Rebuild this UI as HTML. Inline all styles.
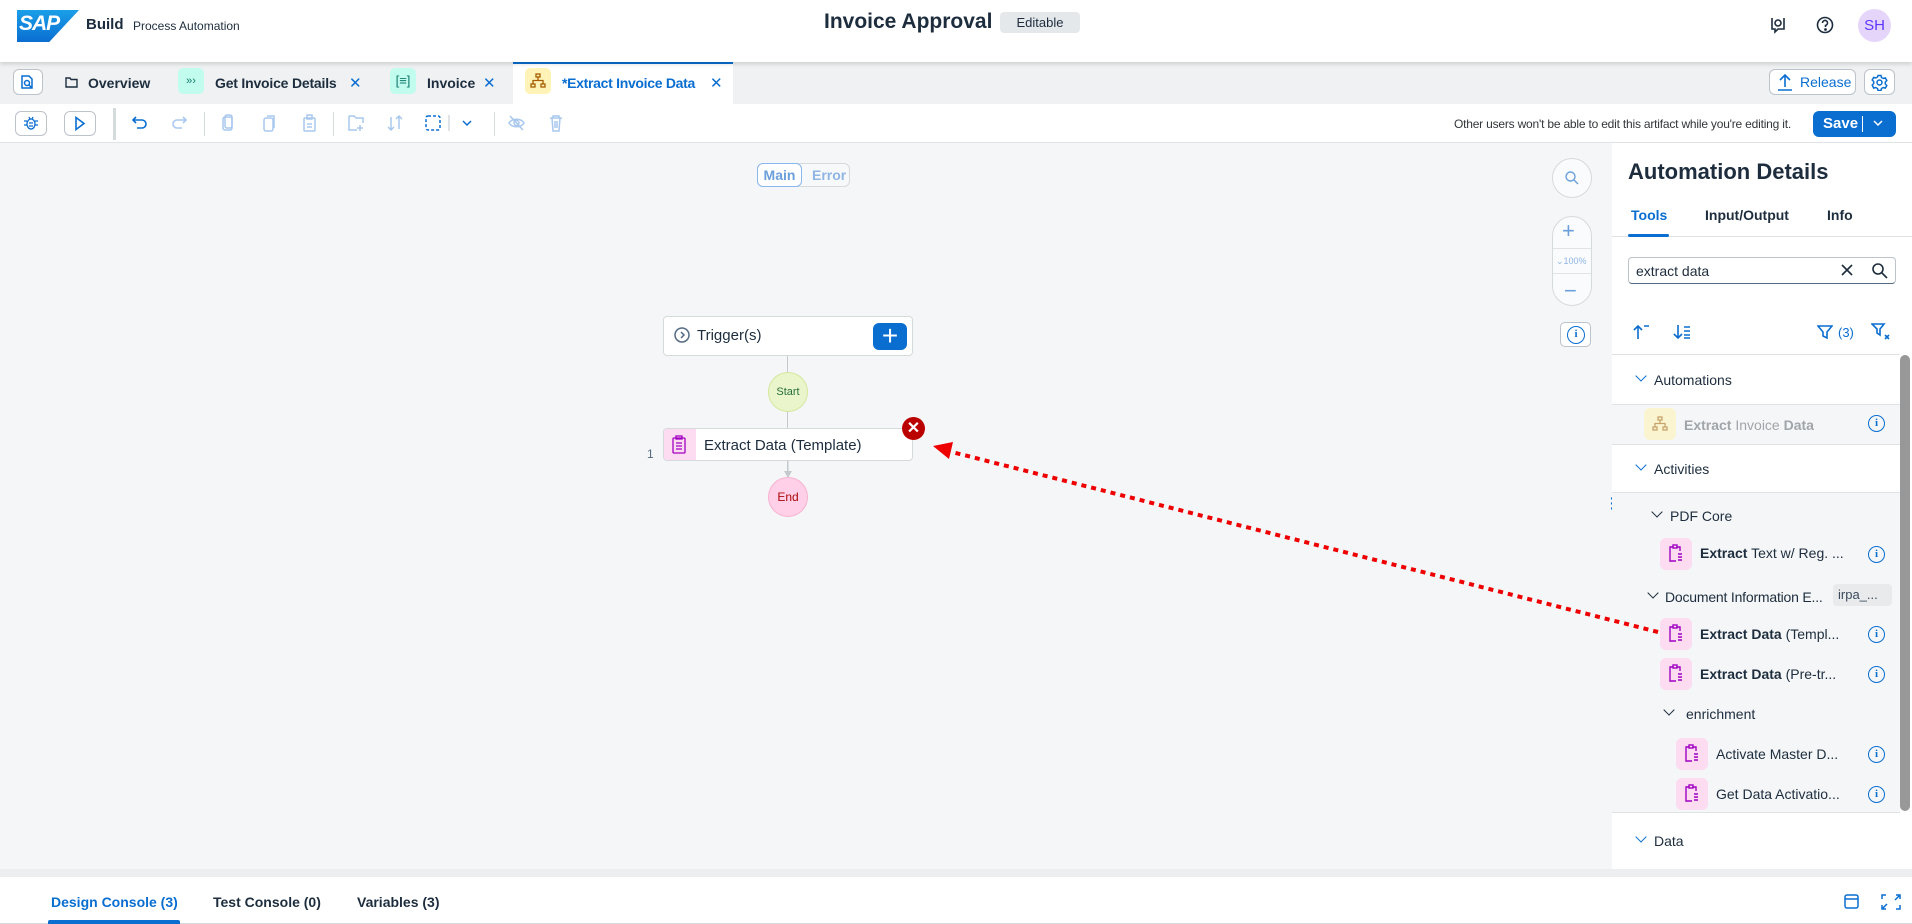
<!DOCTYPE html>
<html><head><meta charset="utf-8"><style>
*{box-sizing:border-box;margin:0;padding:0}
body{width:1912px;height:924px;overflow:hidden;background:#f5f6f7;font-family:"Liberation Sans",Arial,sans-serif;color:#1d2d3e;position:relative}
.a{position:absolute}
.hdr{left:0;top:0;width:1912px;height:62px;background:#fff;box-shadow:0 2px 4px rgba(0,0,0,.15);z-index:3}
.tabs{left:0;top:62px;width:1912px;height:42px;background:#eff1f2}
.tb{left:0;top:104px;width:1912px;height:39px;background:#fff;border-bottom:1px solid #e0e3e6}
.tab{font-size:14px;font-weight:bold;top:75px}
.x{color:#0a6ed1;font-size:15px;top:74px}
.tile{width:26px;height:26px;border-radius:5px;top:68px}
.btn{border:1px solid #bcc3ca;border-radius:6px;background:#fff}
.rp{left:1612px;top:143px;width:300px;height:726px;background:#fff}
.row{font-size:14px;color:#1d2d3e}
.ic{width:32px;height:32px;border-radius:6px;background:#fddcf2}
.info{width:17px;height:17px;border:1.6px solid #0a6ed1;border-radius:50%;color:#0a6ed1;font-size:11px;font-weight:bold;text-align:center;line-height:14px;font-family:"Liberation Serif",serif}
.chev{width:8px;height:8px;border-right:1.6px solid #1d2d3e;border-bottom:1.6px solid #1d2d3e;transform:rotate(45deg)}
.chev.b{border-color:#0a6ed1}
</style></head><body>
<!-- header -->
<div class="a hdr">
  <div class="a" style="left:17px;top:10px;width:62px;height:32px;background:linear-gradient(#1a9fe8,#0a6ed1);clip-path:polygon(0 0,100% 0,52% 100%,0 100%)"></div>
  <div class="a" style="left:19px;top:12px;color:#fff;font-weight:bold;font-size:21px;font-style:italic;letter-spacing:-1px">SAP</div>
  <div class="a" style="left:86px;top:16px;font-size:15px;font-weight:bold">Build</div>
  <div class="a" style="left:133px;top:19px;font-size:12px">Process Automation</div>
  <div class="a" style="left:824px;top:10px;font-size:21px;font-weight:bold">Invoice Approval</div>
  <div class="a" style="left:1000px;top:12px;width:80px;height:21px;background:#e5e8eb;border-radius:4px;font-size:13px;text-align:center;line-height:21px">Editable</div>
  <svg class="a" style="left:1768px;top:15px" width="20" height="20" viewBox="0 0 20 20" fill="none" stroke="#1d2d3e" stroke-width="1.6"><path d="M4 3v11h3v3l3-3h6V3"/><circle cx="10" cy="8" r="3"/></svg>
  <svg class="a" style="left:1815px;top:15px" width="20" height="20" viewBox="0 0 20 20" fill="none" stroke="#1d2d3e" stroke-width="1.6"><circle cx="10" cy="10" r="7.5"/><path d="M7.5 8a2.5 2.5 0 1 1 3 2.4V12"/><circle cx="10.5" cy="14.5" r=".6" fill="#1d2d3e"/></svg>
  <div class="a" style="left:1858px;top:9px;width:33px;height:33px;border-radius:50%;background:#e5d5fb;color:#5d36ff;font-size:15px;text-align:center;line-height:33px">SH</div>
</div>
<!-- tabs -->
<div class="a tabs"></div>
<div class="a btn" style="left:13px;top:69px;width:30px;height:26px"></div>
<svg class="a" style="left:20px;top:74px" width="16" height="16" viewBox="0 0 16 16" fill="none" stroke="#0a6ed1" stroke-width="1.5"><path d="M2 2h7l3 3v9H2z"/><circle cx="7" cy="9" r="2.5"/><path d="M9 11l3 3"/></svg>
<svg class="a" style="left:65px;top:76px" width="13" height="12" viewBox="0 0 13 12" fill="none" stroke="#1d2d3e" stroke-width="1.4"><path d="M1 2h4l1 1.5h6V11H1z"/></svg>
<div class="a tab" style="left:88px">Overview</div>
<div class="a tile" style="left:178px;background:#c2fcee;color:#0f7a6b;font-size:11px;text-align:center;line-height:26px">»›</div>
<div class="a tab" style="left:215px;letter-spacing:-.2px">Get Invoice Details</div><div class="a x" style="left:349px">✕</div>
<div class="a tile" style="left:390px;background:#c2fcee;color:#0f7a6b;font-size:13px;text-align:center;line-height:26px">[≡]</div>
<div class="a tab" style="left:427px">Invoice</div><div class="a x" style="left:483px">✕</div>
<div class="a" style="left:513px;top:61px;width:220px;height:43px;background:#fff;border-top:3px solid #0a6ed1"></div>
<div class="a tile" style="left:525px;background:#fff3b8"></div>
<svg class="a" style="left:530px;top:73px" width="16" height="16" viewBox="0 0 16 16" fill="none" stroke="#a45d00" stroke-width="1.3"><rect x="6" y="1" width="4" height="3"/><rect x="1" y="11" width="4" height="3"/><rect x="11" y="11" width="4" height="3"/><path d="M8 4v3M3 11V7.5h10V11"/></svg>
<div class="a tab" style="left:562px;color:#0a6ed1;letter-spacing:-.3px">*Extract Invoice Data</div><div class="a x" style="left:710px">✕</div>
<div class="a btn" style="left:1769px;top:69px;width:87px;height:26px;color:#0a6ed1;font-size:14px;line-height:24px;padding-left:30px">Release</div>
<svg class="a" style="left:1777px;top:73px" width="16" height="18" viewBox="0 0 16 18" fill="none" stroke="#0a6ed1" stroke-width="1.6"><path d="M8 14V2M3 7l5-5 5 5M1 17h14"/></svg>
<div class="a btn" style="left:1864px;top:69px;width:31px;height:26px"></div>
<svg class="a" style="left:1871px;top:74px" width="17" height="17" viewBox="0 0 17 17" fill="none" stroke="#0a6ed1" stroke-width="1.5"><circle cx="8.5" cy="8.5" r="2.5"/><path d="M7 1.5h3l.5 2 1.8 1 2-.6 1.5 2.6-1.5 1.5v2l1.5 1.5-1.5 2.6-2-.6-1.8 1-.5 2H7l-.5-2-1.8-1-2 .6L1.2 11l1.5-1.5v-2L1.2 6l1.5-2.6 2 .6 1.8-1z"/></svg>
<!-- toolbar -->
<div class="a tb"></div>
<div class="a btn" style="left:15px;top:111px;width:32px;height:25px"></div>
<svg class="a" style="left:23px;top:115px" width="16" height="16" viewBox="0 0 16 16" fill="none" stroke="#0a6ed1" stroke-width="1.3"><ellipse cx="8" cy="9" rx="4" ry="5"/><path d="M1 6h3M12 6h3M1 10h3M12 10h3M6 2l1 2M10 2l-1 2M6 8h4M6 11h4"/></svg>
<div class="a btn" style="left:64px;top:111px;width:32px;height:25px"></div>
<svg class="a" style="left:73px;top:116px" width="14" height="15" viewBox="0 0 14 15" fill="none" stroke="#0a6ed1" stroke-width="1.6"><path d="M3 1.5l8 6-8 6z"/></svg>
<div class="a" style="left:113px;top:108px;width:3px;height:32px;background:#d5dadd"></div>
<svg class="a" style="left:131px;top:114px" width="18" height="18" viewBox="0 0 18 18" fill="none" stroke="#0a6ed1" stroke-width="1.6"><path d="M5 3L2 6l3 3M2 6h9a4 4 0 0 1 0 8H6"/></svg>
<svg class="a" style="left:170px;top:114px" width="18" height="18" viewBox="0 0 18 18" fill="none" stroke="#a9c8ee" stroke-width="1.6"><path d="M13 3l3 3-3 3M16 6H7a4 4 0 0 0 0 8h5"/></svg>
<div class="a" style="left:204px;top:112px;width:1px;height:24px;background:#d5dadd"></div>
<svg class="a" style="left:220px;top:113px" width="100" height="20" viewBox="0 0 100 20" fill="none" stroke="#a9c8ee" stroke-width="1.5"><rect x="3" y="4" width="9" height="13" rx="2"/><rect x="5" y="2" width="7" height="13" rx="2"/><rect x="44" y="5" width="9" height="13" rx="2"/><path d="M47 3h7v12"/><rect x="84" y="5" width="11" height="13" rx="1"/><rect x="87" y="2" width="5" height="4"/><path d="M87 11h5M87 14h5"/></svg>
<div class="a" style="left:333px;top:112px;width:1px;height:24px;background:#d5dadd"></div>
<svg class="a" style="left:347px;top:113px" width="140" height="20" viewBox="0 0 140 20" fill="none" stroke-width="1.5"><path stroke="#a9c8ee" d="M2 3h5l2 2h7v5M2 3v14h8M13 12v6M10 15h6"/><path stroke="#a9c8ee" d="M44 4v13M41 14l3 3 3-3M52 16V3M49 6l3-3 3 3"/><rect stroke="#0a6ed1" stroke-dasharray="3 2" x="79" y="3" width="14" height="14" rx="2"/><path stroke="#d5dadd" d="M102 2v16"/><path stroke="#0a6ed1" d="M116 8l4 4 4-4"/></svg>
<div class="a" style="left:494px;top:112px;width:1px;height:24px;background:#d5dadd"></div>
<svg class="a" style="left:507px;top:113px" width="60" height="20" viewBox="0 0 60 20" fill="none" stroke="#a9c8ee" stroke-width="1.5"><path d="M2 10c3-5 12-5 15 0-3 5-12 5-15 0zM3 3l13 14"/><circle cx="9.5" cy="10" r="2.5"/><path d="M43 5h12M46 5V3h6v2M45 5l1 13h6l1-13M48 8v7M50 8v7"/></svg>
<div class="a" style="left:1441px;top:117px;width:350px;text-align:right;font-size:12px;color:#32363a;white-space:nowrap;letter-spacing:-.2px">Other users won't be able to edit this artifact while you're editing it.</div>
<div class="a" style="left:1813px;top:111px;width:83px;height:26px;background:#0a6ed1;border-radius:6px;color:#fff;font-weight:bold;font-size:15px;line-height:26px;padding-left:10px">Save</div>
<div class="a" style="left:1862px;top:116px;width:1px;height:16px;background:#fff"></div>
<svg class="a" style="left:1872px;top:118px" width="12" height="10" viewBox="0 0 12 10" fill="none" stroke="#fff" stroke-width="1.5"><path d="M2 3l4 4 4-4"/></svg>
<!-- canvas -->
<div class="a" style="left:757px;top:163px;width:93px;height:24px;border:1px solid #d5dadd;border-radius:6px;background:#f7f8f9"></div>
<div class="a" style="left:757px;top:163px;width:45px;height:24px;border:1px solid #89b7ee;border-radius:6px;background:#fff;color:#6a9fdb;font-weight:bold;font-size:14px;text-align:center;line-height:22px">Main</div>
<div class="a" style="left:812px;top:167px;color:#8fb5e5;font-weight:bold;font-size:14px">Error</div>
<div class="a" style="left:787px;top:356px;width:1px;height:140px;background:#c4c9cd"></div>
<div class="a" style="left:663px;top:316px;width:250px;height:40px;background:#fff;border:1px solid #d5dadd;border-radius:4px"></div>
<svg class="a" style="left:673px;top:326px" width="18" height="18" viewBox="0 0 18 18" fill="none" stroke="#556b82" stroke-width="1.5"><circle cx="9" cy="9" r="7"/><path d="M8 6l3 3-3 3"/></svg>
<div class="a" style="left:697px;top:327px;font-size:15px">Trigger(s)</div>
<div class="a" style="left:873px;top:323px;width:34px;height:27px;background:#0a6ed1;border-radius:6px;color:#fff;font-size:28px;text-align:center;line-height:26px">+</div>
<div class="a" style="left:768px;top:372px;width:40px;height:40px;border-radius:50%;background:#ebf5cb;border:1px solid #d4e79e;font-size:11px;color:#256f3a;text-align:center;line-height:38px">Start</div>
<div class="a" style="left:663px;top:428px;width:250px;height:33px;background:#fff;border:1px solid #d5dadd;border-radius:4px;overflow:hidden"><div style="width:32px;height:33px;background:#fddcf2"></div></div>
<svg class="a" style="left:670px;top:435px" width="18" height="19" viewBox="0 0 18 19" fill="none" stroke="#a100c2" stroke-width="1.3"><rect x="3" y="3" width="12" height="15" rx="1"/><rect x="6" y="1" width="6" height="3"/><path d="M6 8h6M6 11h6M6 14h6"/></svg>
<div class="a" style="left:704px;top:437px;font-size:15px">Extract Data (Template)</div>
<div class="a" style="left:647px;top:447px;font-size:12px;color:#556b82">1</div>
<div class="a" style="left:902px;top:417px;width:23px;height:23px;border-radius:50%;background:#bb0000;color:#fff;font-size:16px;font-weight:bold;text-align:center;line-height:23px">✕</div>
<svg class="a" style="left:782px;top:461px" width="12" height="18"><path d="M6 0v12" stroke="#c4c9cd"/><path d="M2 10l4 7 4-7z" fill="#c4c9cd"/></svg>
<div class="a" style="left:768px;top:477px;width:40px;height:40px;border-radius:50%;background:#ffd0e7;border:1px solid #f9b3d2;font-size:12px;color:#aa0808;text-align:center;line-height:38px">End</div>
<!-- zoom controls -->
<div class="a" style="left:1552px;top:158px;width:40px;height:40px;border-radius:50%;background:#fafbfc;border:1px solid #d5dadd"></div>
<svg class="a" style="left:1564px;top:170px" width="16" height="16" viewBox="0 0 16 16" fill="none" stroke="#6a9fdb" stroke-width="1.4"><circle cx="6.5" cy="6.5" r="4.5"/><path d="M10 10l4 4"/></svg>
<div class="a" style="left:1552px;top:216px;width:40px;height:90px;border-radius:20px;background:#fafbfc;border:1px solid #d5dadd"></div>
<div class="a" style="left:1553px;top:248px;width:38px;height:1px;background:#e0e3e6"></div>
<div class="a" style="left:1553px;top:273px;width:38px;height:1px;background:#e0e3e6"></div>
<div class="a" style="left:1562px;top:218px;color:#6a9fdb;font-size:22px">+</div>
<div class="a" style="left:1556px;top:256px;color:#8fb5e5;font-size:9px">⌄100%</div>
<div class="a" style="left:1564px;top:278px;color:#6a9fdb;font-size:22px">−</div>
<div class="a" style="left:1560px;top:322px;width:31px;height:25px;border:1px solid #bcc3ca;border-radius:5px;background:#fff"></div>
<div class="a info" style="left:1567px;top:326px;width:18px;height:18px">i</div>
<div class="a" style="left:1610px;top:496px;color:#0a6ed1;font-size:14px;line-height:5px;font-weight:bold">·<br>·<br>·</div>
<!-- right panel -->
<div class="a rp"></div>
<div class="a" style="left:1628px;top:159px;font-size:22px;font-weight:bold">Automation Details</div>
<div class="a" style="left:1631px;top:207px;font-size:14px;font-weight:bold;color:#0a6ed1">Tools</div>
<div class="a" style="left:1705px;top:207px;font-size:14px;font-weight:bold">Input/Output</div>
<div class="a" style="left:1827px;top:207px;font-size:14px;font-weight:bold">Info</div>
<div class="a" style="left:1612px;top:236px;width:300px;height:1px;background:#e0e3e6"></div>
<div class="a" style="left:1628px;top:234px;width:41px;height:3px;background:#0a6ed1;border-radius:2px"></div>
<div class="a" style="left:1628px;top:257px;width:268px;height:27px;border:1px solid #bcc3ca;border-bottom-color:#556b82;border-radius:4px;font-size:14px;padding:5px 7px">extract data</div>
<svg class="a" style="left:1840px;top:263px" width="14" height="14" stroke="#1d2d3e" stroke-width="1.6"><path d="M2 2l10 10M12 2L2 12"/></svg>
<svg class="a" style="left:1871px;top:262px" width="17" height="17" viewBox="0 0 17 17" fill="none" stroke="#1d2d3e" stroke-width="1.6"><circle cx="7" cy="7" r="5"/><path d="M11 11l5 5"/></svg>
<svg class="a" style="left:1633px;top:323px" width="60" height="18" fill="none" stroke="#0a6ed1" stroke-width="1.6"><path d="M5 16V3M1 7l4-4 4 4M11 3h5"/><path d="M45 2v13M41 11l4 4 4-4M51 4h6M51 8h6M51 12h6M51 15h6"/></svg>
<svg class="a" style="left:1817px;top:324px" width="16" height="16" viewBox="0 0 16 16" fill="none" stroke="#0a6ed1" stroke-width="1.6"><path d="M1 2h14l-5 6v6l-4-2V8z"/></svg>
<div class="a" style="left:1838px;top:325px;color:#0a6ed1;font-size:13px">(3)</div>
<svg class="a" style="left:1871px;top:323px" width="20" height="18" viewBox="0 0 20 18" fill="none" stroke="#0a6ed1" stroke-width="1.6"><path d="M1 1h12l-4 5v6l-3-2V6z"/><path d="M14 12l4 4M18 12l-4 4"/></svg>
<div class="a" style="left:1612px;top:354px;width:288px;height:1px;background:#e0e3e6"></div>
<div class="a" style="left:1612px;top:404px;width:288px;height:40px;background:#f5f6f7;border-top:1px solid #e0e3e6"></div>
<div class="a" style="left:1612px;top:444px;width:288px;height:49px;background:#fff;border-top:1px solid #e0e3e6;border-bottom:1px solid #e0e3e6"></div>
<div class="a" style="left:1612px;top:493px;width:288px;height:320px;background:#f5f6f7;border-bottom:1px solid #e0e3e6"></div>
<div class="a" style="left:1900px;top:355px;width:10px;height:456px;background:#989898;border-radius:5px"></div>
<div class="a chev b" style="left:1637px;top:372px"></div>
<div class="a row" style="left:1654px;top:372px">Automations</div>
<div class="a ic" style="left:1644px;top:408px;background:#fff3b8;opacity:.6"></div>
<svg class="a" style="left:1652px;top:416px" width="16" height="16" viewBox="0 0 16 16" fill="none" stroke="#c8a46c" stroke-width="1.3"><rect x="6" y="1" width="4" height="3"/><rect x="1" y="11" width="4" height="3"/><rect x="11" y="11" width="4" height="3"/><path d="M8 4v3M3 11V7.5h10V11"/></svg>
<div class="a row" style="left:1684px;top:417px;color:#a0a5aa"><b>Extract</b> Invoice <b>Data</b></div>
<div class="a chev b" style="left:1637px;top:461px"></div>
<div class="a row" style="left:1654px;top:461px">Activities</div>
<div class="a chev" style="left:1653px;top:508px"></div>
<div class="a row" style="left:1670px;top:508px">PDF Core</div>
<div class="a chev" style="left:1649px;top:589px"></div>
<div class="a row" style="left:1665px;top:589px;letter-spacing:-.2px">Document Information E...</div>
<div class="a" style="left:1833px;top:584px;width:59px;height:22px;background:#e8eaec;border-radius:4px;font-size:13px;padding:3px 5px;color:#3b4a5a">irpa_...</div>
<div class="a chev" style="left:1665px;top:706px"></div>
<div class="a row" style="left:1686px;top:706px">enrichment</div>
<div class="a chev b" style="left:1637px;top:833px"></div>
<div class="a row" style="left:1654px;top:833px">Data</div>
<!-- activity rows -->
<div class="a ic" style="left:1660px;top:538px"></div><div class="a row" style="left:1700px;top:545px"><b>Extract</b> Text w/ Reg. ...</div>
<div class="a ic" style="left:1660px;top:618px"></div><div class="a row" style="left:1700px;top:626px"><b>Extract Data</b> (Templ...</div>
<div class="a ic" style="left:1660px;top:658px"></div><div class="a row" style="left:1700px;top:666px"><b>Extract Data</b> (Pre-tr...</div>
<div class="a ic" style="left:1676px;top:738px"></div><div class="a row" style="left:1716px;top:746px">Activate Master D...</div>
<div class="a ic" style="left:1676px;top:778px"></div><div class="a row" style="left:1716px;top:786px">Get Data Activatio...</div>
<svg class="a" style="left:1660px;top:538px" width="60" height="280" fill="none" stroke="#a100c2" stroke-width="1.4">
<g id="cb"><path d="M13 9h-3v14h6M17 9h3v4"/><rect x="13" y="7" width="4" height="3"/><path d="M18 16h4M18 19h4M18 22h4"/></g>
<use href="#cb" y="80"/><use href="#cb" y="120"/><use href="#cb" x="16" y="200"/><use href="#cb" x="16" y="240"/>
</svg>
<div class="a info" style="left:1868px;top:415px">i</div>
<div class="a info" style="left:1868px;top:546px">i</div>
<div class="a info" style="left:1868px;top:626px">i</div>
<div class="a info" style="left:1868px;top:666px">i</div>
<div class="a info" style="left:1868px;top:746px">i</div>
<div class="a info" style="left:1868px;top:786px">i</div>
<!-- arrow on top -->
<svg class="a" style="left:920px;top:430px;z-index:5" width="750" height="220"><path d="M738 202L28 21" stroke="#e00" stroke-width="4" stroke-dasharray="5 5"/><path d="M13 16l20 -4 -4 17z" fill="#e00"/></svg>
<!-- bottom -->
<div class="a" style="left:0;top:869px;width:1912px;height:8px;background:#eceef0"></div>
<div class="a" style="left:0;top:877px;width:1912px;height:47px;background:#fff;border-bottom:1px solid #d5dadd"></div>
<div class="a" style="left:51px;top:894px;font-size:14px;font-weight:bold;color:#0a6ed1">Design Console (3)</div>
<div class="a" style="left:213px;top:894px;font-size:14px;font-weight:bold">Test Console (0)</div>
<div class="a" style="left:357px;top:894px;font-size:14px;font-weight:bold">Variables (3)</div>
<div class="a" style="left:48px;top:920px;width:132px;height:4px;background:#0a6ed1;border-radius:2px 2px 0 0"></div>
<svg class="a" style="left:1843px;top:893px" width="60" height="18" fill="none" stroke="#0a6ed1" stroke-width="1.5"><rect x="2" y="2" width="13" height="13" rx="2"/><path d="M2 6h13"/><path d="M39 6V2h4M53 2h4v4M57 12v4h-4M43 16h-4v-4M39 16l5-5M57 2l-5 5"/></svg>
</body></html>
